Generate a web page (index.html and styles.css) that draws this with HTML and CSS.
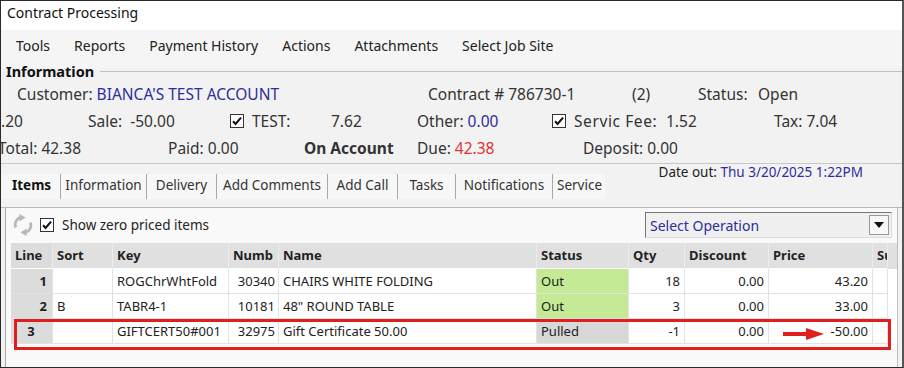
FILE: index.html
```html
<!DOCTYPE html>
<html lang="en">
<head>
    <meta charset="UTF-8">
    <title>Contract Processing</title>
    <link rel="stylesheet" href="styles.css">
</head>
<body>
<div class="window">
    <div class="titlebar">Contract Processing</div>

    <div class="menubar">
        <span>Tools</span>
        <span>Reports</span>
        <span>Payment History</span>
        <span>Actions</span>
        <span>Attachments</span>
        <span>Select Job Site</span>
    </div>

    <div class="info">
        <div class="group-title"><span>Information</span><div class="group-line"></div></div>

        <div class="info-row row1">
            <span>Customer: <span class="blue">BIANCA'S TEST ACCOUNT</span></span>
            <span>Contract # 786730-1</span>
            <span>(2)</span>
            <span>Status:</span>
            <span>Open</span>
        </div>

        <div class="info-row row2">
            <span>.20</span>
            <span>Sale:&nbsp; -50.00</span>
            <span class="check"><svg width="14" height="14" viewBox="0 0 14 14"><rect x="0.5" y="0.5" width="13" height="13" fill="#fff" stroke="#333"/><path d="M3 7.2 L5.6 10 L11 3.6" fill="none" stroke="#111" stroke-width="2"/></svg></span>
            <span>TEST:</span>
            <span>7.62</span>
            <span>Other: <span class="blue">0.00</span></span>
            <span class="check"><svg width="14" height="14" viewBox="0 0 14 14"><rect x="0.5" y="0.5" width="13" height="13" fill="#fff" stroke="#333"/><path d="M3 7.2 L5.6 10 L11 3.6" fill="none" stroke="#111" stroke-width="2"/></svg></span>
            <span class="fee">Servic Fee:</span>
            <span>1.52</span>
            <span>Tax: 7.04</span>
        </div>

        <div class="info-row row3">
            <span class="clip-left">Total: 42.38</span>
            <span>Paid: 0.00</span>
            <span class="bold">On Account</span>
            <span>Due: <span class="red">42.38</span></span>
            <span>Deposit: 0.00</span>
        </div>
    </div>

    <div class="tabs-area">
        <div class="tabs">
            <div class="tab active t-items">Items</div>
            <div class="tab t-info">Information</div>
            <div class="tab t-delivery">Delivery</div>
            <div class="tab t-comments">Add Comments</div>
            <div class="tab t-call">Add Call</div>
            <div class="tab t-tasks">Tasks</div>
            <div class="tab t-notif">Notifications</div>
            <div class="tab t-service">Service</div>
        </div>
        <div class="date-out">Date out: <span class="blue">Thu 3/20/2025 1:22PM</span></div>
    </div>

    <div class="panel">
        <div class="toolbar">
            <svg class="refresh" width="22" height="22" viewBox="0 0 22 22">
                <path d="M3.5 13.5 A8 8 0 0 1 9 3.2" fill="none" stroke="#b8b8b8" stroke-width="2.8"/>
                <path d="M7.5 0 L13.5 3.6 L7.5 7.5 Z" fill="#b8b8b8"/>
                <path d="M18.5 8.5 A8 8 0 0 1 13 18.8" fill="none" stroke="#b8b8b8" stroke-width="2.8"/>
                <path d="M14.5 22 L8.5 18.4 L14.5 14.5 Z" fill="#b8b8b8"/>
            </svg>
            <span class="check"><svg width="14" height="14" viewBox="0 0 14 14"><rect x="0.5" y="0.5" width="13" height="13" fill="#fff" stroke="#333"/><path d="M3 7.2 L5.6 10 L11 3.6" fill="none" stroke="#111" stroke-width="2"/></svg></span>
            <span class="zero-label">Show zero priced items</span>
            <div class="select">
                <span>Select Operation</span>
                <span class="select-btn"><svg width="10" height="6" viewBox="0 0 10 6"><path d="M0 0 H10 L5 6 Z" fill="#111"/></svg></span>
            </div>
        </div>

        <div class="grid">
            <div class="grid-row head">
                <div class="c-line">Line</div>
                <div class="c-sort">Sort</div>
                <div class="c-key">Key</div>
                <div class="c-numb">Numb</div>
                <div class="c-name">Name</div>
                <div class="c-status">Status</div>
                <div class="c-qty">Qty</div>
                <div class="c-disc">Discount</div>
                <div class="c-price">Price</div>
                <div class="c-s">Su</div>
            </div>
            <div class="grid-row">
                <div class="c-line num">1</div>
                <div class="c-sort"></div>
                <div class="c-key">ROGChrWhtFold</div>
                <div class="c-numb num">30340</div>
                <div class="c-name">CHAIRS WHITE FOLDING</div>
                <div class="c-status out">Out</div>
                <div class="c-qty num">18</div>
                <div class="c-disc num">0.00</div>
                <div class="c-price num">43.20</div>
                <div class="c-s"></div>
            </div>
            <div class="grid-row">
                <div class="c-line num">2</div>
                <div class="c-sort">B</div>
                <div class="c-key">TABR4-1</div>
                <div class="c-numb num">10181</div>
                <div class="c-name">48" ROUND TABLE</div>
                <div class="c-status out">Out</div>
                <div class="c-qty num">3</div>
                <div class="c-disc num">0.00</div>
                <div class="c-price num">33.00</div>
                <div class="c-s"></div>
            </div>
            <div class="grid-row">
                <div class="c-line cur">3</div>
                <div class="c-sort"></div>
                <div class="c-key">GIFTCERT50#001</div>
                <div class="c-numb num">32975</div>
                <div class="c-name">Gift Certificate 50.00</div>
                <div class="c-status pulled">Pulled</div>
                <div class="c-qty num">-1</div>
                <div class="c-disc num">0.00</div>
                <div class="c-price num">-50.00</div>
                <div class="c-s"></div>
            </div>
        </div>

        <div class="highlight"></div>
        <svg class="arrow" width="42" height="14" viewBox="0 0 42 14">
            <path d="M0 7 H28" stroke="#e01e1e" stroke-width="4"/>
            <path d="M23 1 L41 7 L23 13 Z" fill="#e01e1e"/>
        </svg>
    </div>
</div>
</body>
</html>
```

FILE: styles.css
```css
* {
    box-sizing: border-box;
}
body {
    margin: 0;
    width: 904px;
    height: 368px;
    overflow: hidden;
    font-family: "Noto Sans", "Open Sans", sans-serif;
    font-size: 14px;
    color: #222;
}
.window {
    width: 904px;
    height: 368px;
    border: 1px solid #2a2a2a;
    border-right: 2px solid #555;
    background: #f2f2f2;
    overflow: hidden;
    display: flex;
    flex-direction: column;
}
.blue {
    color: #2d2d9c;
}
.red {
    color: #e03232;
}
.bold {
    font-weight: bold;
}
.titlebar {
    height: 29px;
    background: #fff;
    padding-left: 6px;
    line-height: 24px;
    font-size: 14px;
    color: #111;
}
.menubar {
    height: 38px;
    flex: none;
    background: #f5f5f5;
    display: flex;
    gap: 24px;
    align-items: flex-start;
    padding-top: 6px;
    line-height: 20px;
    padding-left: 15px;
}

/* information group */
.info {
    height: 96px;
    flex: none;
    border-bottom: 1px solid #c8c8c8;
    font-size: 15.5px;
}
.group-title {
    display: flex;
    align-items: center;
    height: 14px;
    margin-top: -4px;
    padding-left: 5px;
    font-weight: bold;
    font-size: 14.5px;
    color: #111;
}
.group-line {
    flex: 1;
    height: 1px;
    background: #c0c0c0;
    margin-left: 6px;
}
.info-row {
    display: grid;
    align-items: center;
    height: 27px;
    white-space: nowrap;
    color: #333;
}
.row1 {
    margin-top: 2px;
    padding-left: 16px;
    grid-template-columns: 411px 204px 66px 60px auto;
}
.row2 {
    grid-template-columns: 87px 142px 22px 79px 86px 135px 22px 92px 108px auto;
}
.row3 {
    height: 28px;
    grid-template-columns: 167px 136px 113px 166px auto;
}
.fee {
    letter-spacing: 0.6px;
}
.clip-left {
    margin-left: -3px;
}
.check {
    display: flex;
    align-items: center;
}

/* tabs */
.tabs-area {
    height: 44px;
    flex: none;
    display: flex;
    justify-content: space-between;
    border-bottom: 1px solid #b8b8b8;
}
.tabs {
    display: flex;
    width: 604px;
    overflow: hidden;
    padding-left: 3px;
    margin-top: 10px;
    height: 25px;
    background: #f7f7f7;
}
.tab {
    flex: none;
    text-align: center;
    line-height: 23px;
    border-right: 1px solid #a8a8a8;
    font-size: 13.5px;
    color: #333;
}
.tab.active {
    font-weight: bold;
    color: #111;
    text-align: left;
    padding-left: 8px;
}
.t-items { width: 57px; }
.t-info { width: 86px; }
.t-delivery { width: 70px; }
.t-comments { width: 111px; }
.t-call { width: 70px; }
.t-tasks { width: 58px; }
.t-notif { width: 97px; }
.t-service { width: 60px; border-right: none; text-align: left; padding-left: 4px; }
.date-out {
    margin-right: 39px;
    line-height: 16px;
    font-size: 13.5px;
    color: #222;
}

/* items panel */
.panel {
    flex: 1;
    position: relative;
    margin-left: 4px;
    margin-right: 4px;
    border-left: 1px solid #a8a8a8;
    border-right: 1px solid #c0c0c0;
    background: #f9f9f9;
}
.toolbar {
    height: 34px;
    display: flex;
    align-items: center;
    padding-left: 6px;
}
.refresh {
    margin-right: 6px;
}
.zero-label {
    margin-left: 8px;
    font-size: 13.5px;
    color: #222;
}
.select {
    margin-left: auto;
    margin-right: 5px;
    width: 247px;
    height: 26px;
    border: 1px solid #777;
    border-right-color: #ddd;
    border-bottom-color: #ddd;
    background: #f0f0f0;
    display: flex;
    align-items: center;
    justify-content: space-between;
    padding-left: 4px;
    padding-right: 2px;
    color: #2d2d9c;
    font-size: 14px;
}
.select-btn {
    width: 20px;
    height: 20px;
    border: 1px solid #999;
    background: #f7f7f7;
    display: flex;
    align-items: center;
    justify-content: center;
}

/* grid */
.grid {
    margin-left: 5px;
    margin-top: 1px;
    font-size: 13px;
}
.grid-row {
    display: flex;
    height: 25px;
    background: #fff;
}
.grid-row > div {
    flex: none;
    line-height: 24px;
    padding: 0 4px;
    border-right: 1px solid #e2e2e2;
    border-bottom: 1px solid #e2e2e2;
    white-space: nowrap;
    overflow: hidden;
    color: #222;
}
.grid-row.head {
    height: 26px;
    background: #e0e0e0;
}
.grid-row.head > div {
    font-weight: bold;
    line-height: 25px;
    border-right: 1px solid #ececec;
    border-bottom: 1px solid #fff;
    color: #222;
}
.num {
    text-align: right;
}
.c-line { width: 42px; background: #dcdcdc; font-weight: bold; padding-right: 5px !important; }
.c-line.cur { text-align: center; }
.c-sort { width: 60px; }
.c-key { width: 116px; }
.c-numb { width: 50px; padding-right: 3px !important; }
.c-name { width: 258px; }
.c-status { width: 92px; }
.c-qty { width: 56px; }
.c-disc { width: 84px; }
.c-price { width: 104px; }
.c-s { width: 15px; }
.out {
    background: #c4ea96;
}
.pulled {
    background: #d8d8d8;
}
.highlight {
    position: absolute;
    left: 8px;
    top: 111px;
    width: 877px;
    height: 31px;
    border: 3px solid #e01e1e;
}
.arrow {
    position: absolute;
    left: 777px;
    top: 119px;
}
```
